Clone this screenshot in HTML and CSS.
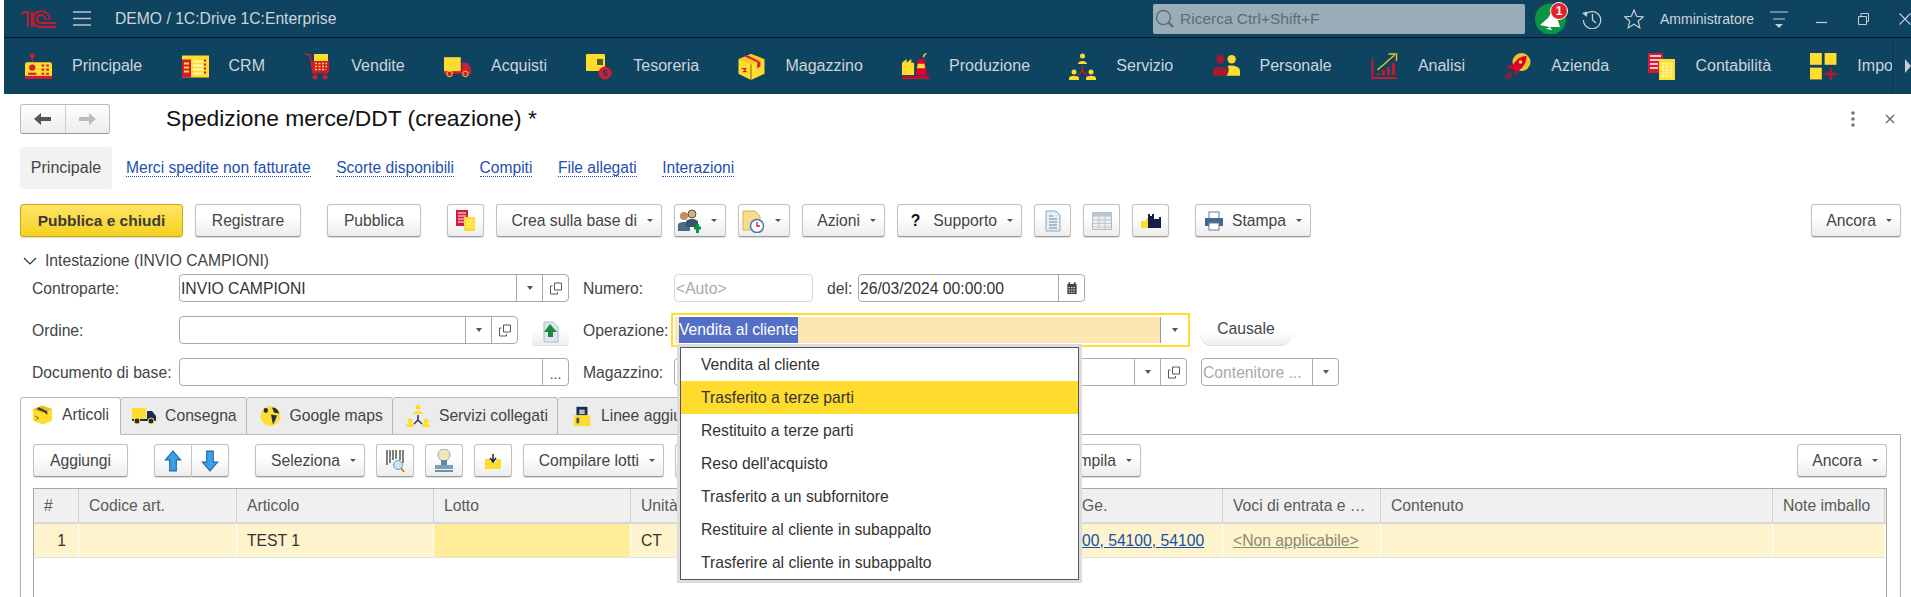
FILE: index.html
```html
<!DOCTYPE html>
<html lang="it">
<head>
<meta charset="utf-8">
<title>Spedizione merce/DDT</title>
<link rel="stylesheet" href="styles.css">
</head>
<body>
<div class="app">
  <header class="topbar">
    <svg class="logo" viewBox="0 0 37 18"><g fill="none" stroke="#c8192e" stroke-width="2"><path d="M1 4 L5 2 H8 V17"/><path d="M12 2 V17" /><path d="M30 10 C29 4 25 1 21 1 C16 1 13 5 13 9 C13 14 16 17 21 17 H36"/><path d="M26 10 C25 7 23 5 21 5 C18 5 17 7 17 9 C17 12 19 13 21 13 H36"/></g></svg>
    <svg class="burger" viewBox="0 0 18 15"><path d="M0 1H18M0 7.500H18M0 14H18" stroke="#b9c4cb" stroke-width="1.300"/></svg>
    <span class="apptitle">DEMO / 1C:Drive 1C:Enterprise</span>
    <div class="search">
      <svg class="searchicon" viewBox="0 0 20 20"><circle cx="8.500" cy="8.500" r="7" fill="none" stroke="#5f6c74" stroke-width="1.400"/><path d="M13.500 13.500L18 18" stroke="#5f6c74" stroke-width="2.400"/></svg>
      <span>Ricerca Ctrl+Shift+F</span>
    </div>
    <div class="bell">
      <svg class="bellicon" viewBox="0 0 31 31"><ellipse cx="15.500" cy="16" rx="15.500" ry="15.500" fill="#0a9443"/><path d="M5 22L13 15L19 5L25 24L14 24Z" fill="#fff"/><path d="M11 26L17 27L15 24Z" fill="#fff"/></svg>
      <span class="badge">1</span>
    </div>
    <svg class="hist" viewBox="0 0 20 20"><path d="M3.200 6A8.600 8.600 0 1 1 1.500 11" fill="none" stroke="#c5ced4" stroke-width="1.300"/><path d="M0 4L5 2.500L5 8Z" fill="#c5ced4"/><path d="M10.500 5V11L14 14" fill="none" stroke="#c5ced4" stroke-width="1.300"/></svg>
    <svg class="star" viewBox="0 0 20 20"><path d="M10 1L12.600 7.300L19.300 7.800L14.200 12.200L15.800 18.900L10 15.300L4.200 18.900L5.800 12.200L.7 7.800L7.400 7.300Z" fill="none" stroke="#c5ced4" stroke-width="1.200"/></svg>
    <span class="user">Amministratore</span>
    <svg class="funnel" viewBox="0 0 18 20"><path d="M0 3H18M3 10H15" stroke="#c5ced4" stroke-width="1.200"/><path d="M5 15H13L9 19Z" fill="#c5ced4"/></svg>
    <svg class="min" viewBox="0 0 11 24"><path d="M0 15.500H11" stroke="#c5ced4" stroke-width="1.200"/></svg>
    <svg class="restore" viewBox="0 0 11 12"><path d="M.5 3.500H8.500V11.500H.5ZM3 3.500V.5H10.500V8.500H8.500" fill="none" stroke="#c5ced4"/></svg>
    <svg class="closewin" viewBox="0 0 12 12"><path d="M.5 .5L11.500 11.500M11.500 .5L.5 11.500" stroke="#c5ced4" stroke-width="1.100"/></svg>
  </header>

  <nav class="mainnav">
    <div class="navscroll">
      <a class="navitem"><svg class="navicon" viewBox="0 0 26 26"><path d="M7 2V9" stroke="#d01c34" stroke-width="1.400"/><circle cx="7" cy="2.500" r="2.300" fill="#d01c34"/><rect y="9" width="26" height="15" rx="2" fill="#ffdc2e"/><rect y="22" width="26" height="3" fill="#d01c34"/><circle cx="7" cy="14" r="3" fill="#d01c34"/><path d="M3 20H11" stroke="#d01c34" stroke-width="2"/><path d="M16 12H24M16 16H24M16 20H24" stroke="#d01c34" stroke-width="2" stroke-dasharray="2.500 2"/></svg><span>Principale</span></a>
      <a class="navitem"><svg class="navicon" viewBox="0 0 27 24"><rect width="27" height="22" y="1" fill="#ffdc2e"/><rect y="5" width="9" height="18" fill="#d01c34"/><path d="M2 9H7M2 13H7M2 17H7" stroke="#ffdc2e" stroke-width="2"/><path d="M11 7H21M11 11H21M11 15H21M11 19H21" stroke="#fff6c0" stroke-width="2"/><path d="M23 5V19" stroke="#d01c34" stroke-width="2" stroke-dasharray="2 2"/></svg><span>CRM</span></a>
      <a class="navitem"><svg class="navicon" viewBox="0 0 27 27"><path d="M1 1L6 2L9 20H24" fill="none" stroke="#d01c34" stroke-width="1.500"/><rect x="10" y="1" width="14" height="7" fill="#ffdc2e"/><rect x="8" y="8" width="17" height="11" fill="#d01c34"/><path d="M11 10.500H23M11 13.500H23M11 16.500H22" stroke="#ffdc2e" stroke-width="1.600" stroke-dasharray="2 1.500"/><circle cx="11" cy="24" r="2.500" fill="#d01c34"/><circle cx="21" cy="24" r="2.500" fill="#d01c34"/></svg><span>Vendite</span></a>
      <a class="navitem"><svg class="navicon" viewBox="0 0 29 24"><rect y="2" width="18" height="16" fill="#ffdc2e"/><path d="M19 8H25L29 14V18H19Z" fill="#d01c34"/><rect y="17" width="29" height="3" fill="#d01c34"/><circle cx="6" cy="20" r="3" fill="#d01c34" stroke="#ffdc2e"/><circle cx="23" cy="20" r="3" fill="#d01c34" stroke="#ffdc2e"/></svg><span>Acquisti</span></a>
      <a class="navitem"><svg class="navicon" viewBox="0 0 27 27"><rect y="1" width="19" height="17" rx="1" fill="#ffdc2e"/><rect x="11" y="6" width="6" height="6" fill="#5a5a20"/><circle cx="19" cy="20" r="6.500" fill="#d01c34"/><path d="M21 17.500H18V20H20.500V22.500H17" fill="none" stroke="#0f4460" stroke-width="1.200"/></svg><span>Tesoreria</span></a>
      <a class="navitem"><svg class="navicon" viewBox="0 0 25 26"><path d="M12 1L25 6V20L12 26L0 20V6Z" fill="#ffdc2e"/><path d="M12 1L25 6L12 11L0 6Z" fill="#f6c81a"/><path d="M5 3L18 9L20 8L8 2Z" fill="#d01c34"/><path d="M12 11V26" stroke="#8a6a10"/><path d="M18 9V15L21 13V8Z" fill="#d01c34"/><path d="M3 15H7L5 18H8" fill="none" stroke="#d01c34" stroke-width="1.200"/></svg><span>Magazzino</span></a>
      <a class="navitem"><svg class="navicon" viewBox="0 0 29 28"><path d="M0 9L5 5V9L10 5V9H13V22H0Z" fill="#ffdc2e" transform="translate(0 1)"/><path d="M17 6H24L27 23H15Z" fill="#e2002a"/><path d="M17 11H24L25 16H16Z" fill="#ffdc2e"/><path d="M26 0C24 1 23 2 23 4" stroke="#ffdc2e" stroke-width="1.500" fill="none"/><rect y="24" width="29" height="2" fill="#e2002a"/><rect y="26.500" width="29" height="1" fill="#d01c34"/></svg><span>Produzione</span></a>
      <a class="navitem"><svg class="navicon" viewBox="0 0 27 27"><circle cx="13.500" cy="3" r="2.500" fill="#ffdc2e"/><path d="M9 11C9 7 18 7 18 11Z" fill="#ffdc2e"/><circle cx="5" cy="19" r="2.500" fill="#ffdc2e"/><path d="M0 27V25C0 22 10 22 10 25V27Z" fill="#ffdc2e"/><circle cx="22" cy="19" r="2.500" fill="#ffdc2e"/><path d="M17 27V25C17 22 27 22 27 25V27Z" fill="#ffdc2e"/><path d="M13.500 13V18L9 22M13.500 18L18 22" stroke="#c8192e" stroke-width="1.500" fill="none"/></svg><span>Servizio</span></a>
      <a class="navitem"><svg class="navicon" viewBox="0 0 26 24"><circle cx="7" cy="5" r="4" fill="#a81a30"/><path d="M0 21V16C0 11 14 11 14 16V21Z" fill="#a81a30"/><circle cx="18" cy="5" r="4" fill="#ffdc2e"/><path d="M13 21H26V16C26 11 15 10 14 12C16 14 15 18 13 21Z" fill="#ffdc2e"/></svg><span>Personale</span></a>
      <a class="navitem"><svg class="navicon" viewBox="0 0 26 27"><path d="M1 6V25H26" fill="none" stroke="#c8192e" stroke-width="2"/><path d="M6 17L23 2" stroke="#e6c21e" stroke-width="1.500"/><path d="M17 1H25V8" fill="none" stroke="#e6c21e" stroke-width="1.500"/><path d="M7 22V20M12 22V17M17 22V14M22 22V10" stroke="#c8192e" stroke-width="3"/></svg><span>Analisi</span></a>
      <a class="navitem"><svg class="navicon" viewBox="0 0 26 27"><circle cx="17" cy="9" r="9" fill="#e6c62c"/><path d="M22 3C15 3 9 9 7 15L11 19C17 17 22 11 22 3Z" fill="#e2002a"/><path d="M7 11L2 15L7 16ZM15 17L11 22L10 17Z" fill="#e2002a"/><path d="M6 18L1 26M8 20L4 26" stroke="#a81a30" stroke-width="1.500"/><circle cx="16" cy="9" r="1.800" fill="#ffdc2e"/></svg><span>Azienda</span></a>
      <a class="navitem"><svg class="navicon" viewBox="0 0 27 27"><rect width="15" height="20" fill="#d01c34"/><path d="M2 3H13M2 7H13M2 11H10M2 15H10" stroke="#fff" stroke-width="1.500"/><rect x="11" y="6" width="16" height="21" fill="#ffdc2e"/><path d="M13 11H25M13 14H25M13 17H25M13 20H25M13 23H25" stroke="#fff6b0" stroke-width="1"/><path d="M15 9V25M19 9V25M23 9V25" stroke="#fff6b0" stroke-width="1"/></svg><span>Contabilità</span></a>
      <a class="navitem"><svg class="navicon" viewBox="0 0 24 24"><rect width="10.500" height="10.500" fill="#ffdc2e"/><rect x="13" width="10.500" height="10.500" fill="#ffdc2e"/><rect y="13" width="10.500" height="10.500" fill="#ffdc2e"/><path d="M13 18.500H24M18.500 13V24" stroke="#a81a30" stroke-width="2.400"/></svg><span>Impostazioni</span></a>
    </div>
    <svg class="navmore" viewBox="0 0 6 14"><path d="M0 0L6 7L0 14Z" fill="#c5ced4"/></svg>
  </nav>

  <main class="form">
    <div class="titlerow">
      <div class="histnav">
        <button class="histbtn"><svg viewBox="0 0 18 14"><path d="M0 7L7 1V5H17V9H7V13Z" fill="#555"/></svg></button>
        <button class="histbtn"><svg viewBox="0 0 18 14"><path d="M18 7L11 1V5H1V9H11V13Z" fill="#bbb"/></svg></button>
      </div>
      <h1 class="doctitle">Spedizione merce/DDT (creazione) *</h1>
      <svg class="dots" viewBox="0 0 4 16"><circle cx="2" cy="2" r="1.800" fill="#777"/><circle cx="2" cy="8" r="1.800" fill="#777"/><circle cx="2" cy="14" r="1.800" fill="#777"/></svg>
      <svg class="closeform" viewBox="0 0 10 10"><path d="M1 1L9 9M9 1L1 9" stroke="#666" stroke-width="1.300"/></svg>
    </div>

    <div class="pagetabs">
      <span class="pagetab">Principale</span>
      <a class="pagelink">Merci spedite non fatturate</a>
      <a class="pagelink">Scorte disponibili</a>
      <a class="pagelink">Compiti</a>
      <a class="pagelink">File allegati</a>
      <a class="pagelink">Interazioni</a>
    </div>

    <div class="toolbar">
      <button class="btn primary w163">Pubblica e chiudi</button>
      <button class="btn w106">Registrare</button>
      <button class="btn w94 far">Pubblica</button>
      <button class="btn ico far"><svg class="i20" viewBox="0 0 20 22"><rect width="12" height="16" fill="#d01c34"/><path d="M2 3H10M2 6H10M2 9H8M2 12H8" stroke="#fff" stroke-width="1.200"/><rect x="8" y="7" width="11" height="14" fill="#ffdc2e"/><path d="M10 11H17M10 14H17M10 17H17" stroke="#fff6b0"/></svg></button>
      <button class="btn w166">Crea sulla base di<i class="caret"></i></button>
      <button class="btn w52"><svg class="i24" viewBox="0 0 24 24"><circle cx="7" cy="7" r="4" fill="#c09060"/><path d="M1 22V16C1 12 13 12 13 16V22Z" fill="#4a6a8a"/><circle cx="15" cy="5" r="4" fill="#d8b080" stroke="#333" stroke-width=".8"/><path d="M9 20V13C9 9 21 9 21 13V18H9Z" fill="#39536e"/><path d="M17 19H24M20.500 15V24" stroke="#0a9443" stroke-width="3"/></svg><i class="caret"></i></button>
      <button class="btn w52"><svg class="i24" viewBox="0 0 24 24"><path d="M2 2H14L19 7V21H2Z" fill="#f7dc90" stroke="#d8b050"/><circle cx="16" cy="17" r="6.500" fill="#fff" stroke="#4a7ab0" stroke-width="1.500"/><path d="M16 13V17H19" stroke="#c8192e" stroke-width="1.300" fill="none"/></svg><i class="caret"></i></button>
      <button class="btn w83">Azioni<i class="caret"></i></button>
      <button class="btn w125"><span class="help">?</span>Supporto<i class="caret"></i></button>
      <button class="btn ico"><svg class="i20" viewBox="0 0 18 22"><path d="M2 1H12L16 5V21H2Z" fill="#e6eef4" stroke="#88a8c0"/><path d="M5 6H9M5 9H13M5 12H13M5 15H13M5 18H13" stroke="#6a8aa0"/></svg></button>
      <button class="btn ico"><svg class="i20" viewBox="0 0 20 18"><rect x=".5" y=".5" width="19" height="17" fill="#f2ede8" stroke="#a8bccb"/><rect x=".5" y=".5" width="19" height="4" fill="#b4c8d6"/><path d="M1 8H19M1 11.500H19M1 15H19M7 4V18M13 4V18" stroke="#b8c8d4"/></svg></button>
      <button class="btn ico"><svg class="i20" viewBox="0 0 20 16"><path d="M0 8H5V5H9V15H0Z" fill="#ffdc2e"/><path d="M7 8V1H9V3H11V1H13V6H18V4H20V15H7Z" fill="#141e48"/></svg></button>
      <button class="btn w116 far"><svg class="i20 mr" viewBox="0 0 20 20"><rect x="5" y="1" width="10" height="7" fill="#fff" stroke="#6a7a8a"/><rect x="1" y="7" width="18" height="8" fill="#3e6a94"/><rect x="5" y="12" width="10" height="7" fill="#fff" stroke="#6a7a8a"/></svg>Stampa<i class="caret"></i></button>
      <button class="btn w90 pushright">Ancora<i class="caret"></i></button>
    </div>

    <div class="group"><svg class="chev" viewBox="0 0 14 8"><path d="M1 1L7 7L13 1" fill="none" stroke="#333" stroke-width="1.200"/></svg>Intestazione (INVIO CAMPIONI)</div>

    <div class="fields">
      <div class="frow">
        <label class="lbl">Controparte:</label>
        <div class="field f390"><span class="val">INVIO CAMPIONI</span><span class="fb ddb"><i class="tri"></i></span><span class="fb opn"><svg viewBox="0 0 12 12"><path d="M4.500 .5H11.500V7.500H4.500ZM2.500 3.500H.5V11.500H7.500V9.500" fill="none" stroke="#555"/></svg></span></div>
        <label class="lbl lbl91">Numero:</label>
        <div class="field off f139"><span class="val ph">&lt;Auto&gt;</span></div>
        <label class="lbl del">del:</label>
        <div class="field f227"><span class="val">26/03/2024 00:00:00</span><span class="fb"><svg viewBox="0 0 12 14"><path d="M1 2H11V13H1Z" fill="#444"/><path d="M3 0V3M9 0V3" stroke="#444" stroke-width="1.400"/><path d="M2.500 6H9.500M2.500 8.500H9.500M2.500 11H9.500" stroke="#fff" stroke-dasharray="1.500 1"/></svg></span></div>
      </div>
      <div class="frow">
        <label class="lbl">Ordine:</label>
        <div class="field f339"><span class="val"></span><span class="fb ddb"><i class="tri"></i></span><span class="fb opn"><svg viewBox="0 0 12 12"><path d="M4.500 .5H11.500V7.500H4.500ZM2.500 3.500H.5V11.500H7.500V9.500" fill="none" stroke="#555"/></svg></span></div>
        <button class="softbtn"><svg class="i20" viewBox="0 0 20 22"><path d="M3 1H12L17 6V21H3Z" fill="#dce8ee" stroke="#a8bcc8"/><path d="M9 3L16 11H12V16H7V11H3Z" fill="#1f8a3a"/></svg></button>
        <label class="lbl lbl88">Operazione:</label>
        <div class="focusfield"><span class="focusval"><span class="sel">Vendita al cliente</span></span><span class="fb ddbf"><i class="tri"></i></span></div>
        <button class="causale">Causale</button>
      </div>
      <div class="frow">
        <label class="lbl">Documento di base:</label>
        <div class="field f390"><span class="val"></span><span class="fb dotsb">...</span></div>
        <label class="lbl lbl91">Magazzino:</label>
        <div class="field f513"><span class="val"></span><span class="fb ddb"><i class="tri"></i></span><span class="fb opn"><svg viewBox="0 0 12 12"><path d="M4.500 .5H11.500V7.500H4.500ZM2.500 3.500H.5V11.500H7.500V9.500" fill="none" stroke="#555"/></svg></span></div>
        <div class="field f138"><span class="val ph">Contenitore ...</span><span class="fb ddb"><i class="tri"></i></span></div>
      </div>
    </div>

    <div class="tabs">
      <div class="tab active"><svg class="i21" viewBox="0 0 22 22"><path d="M11 1L21 5V17L11 21L1 17V5Z" fill="#ffdc2e"/><path d="M11 1L21 5L11 9L1 5Z" fill="#e8c020"/><path d="M7 3L16 7V11L13 8L5 5Z" fill="#3a3a3a"/><path d="M3 12L7 14L4 16" stroke="#6a6a20" fill="none"/></svg>Articoli</div>
      <div class="tab"><svg class="i24 tw" viewBox="0 0 24 18"><rect y="1" width="14" height="12" fill="#ffdc2e"/><path d="M15 4H20L24 9V14H15Z" fill="#1e2a50"/><rect y="12" width="24" height="2" fill="#1e2a50"/><circle cx="5" cy="14" r="3" fill="#1e2a50" stroke="#ffdc2e"/><circle cx="19" cy="14" r="3" fill="#1e2a50" stroke="#ffdc2e"/></svg>Consegna</div>
      <div class="tab"><svg class="i21" viewBox="0 0 21 21"><circle cx="10.500" cy="10.500" r="10" fill="#ffdc2e"/><path d="M4 3C8 1 9 5 7 7C5 8 3 7 4 3ZM12 2C16 2 19 5 19 8L14 7ZM11 9L17 10L15 15L13 19L12 14Z" fill="#1e2a50"/></svg>Google maps</div>
      <div class="tab"><svg class="i24 tw" viewBox="0 0 24 24"><circle cx="12" cy="3" r="2.500" fill="#ffdc2e"/><path d="M7 10C7 6 17 6 17 10Z" fill="#ffdc2e"/><circle cx="4" cy="17" r="2.500" fill="#ffdc2e"/><path d="M0 23V21C0 19 8 19 8 21V23Z" fill="#ffdc2e"/><circle cx="20" cy="17" r="2.500" fill="#ffdc2e"/><path d="M16 23V21C16 19 24 19 24 21V23Z" fill="#ffdc2e"/><path d="M12 11V16L8 20M12 16L16 20" stroke="#1e2a50" stroke-width="1.400" fill="none"/></svg>Servizi collegati</div>
      <div class="tab"><svg class="i21" viewBox="0 0 21 24"><path d="M5 2H17V12H5Z" fill="#1e2a50"/><path d="M8 5H14V10H8Z" fill="#aac0d0"/><rect x="2" y="11" width="18" height="12" fill="#ffdc2e"/><path d="M5 14H8V20H5Z" fill="#555"/></svg>Linee aggiuntive</div>
    </div>
    <section class="panel">
      <div class="toolbar inner">
        <button class="btn w95">Aggiungi</button>
        <div class="btngroup far">
          <button class="btn seg"><svg class="i20" viewBox="0 0 16 20"><path d="M8 1L15 9H11V19H5V9H1Z" fill="#3aa0e8" stroke="#1c6aa8"/></svg></button>
          <button class="btn seg"><svg class="i20" viewBox="0 0 16 20"><path d="M8 19L15 11H11V1H5V11H1Z" fill="#3aa0e8" stroke="#1c6aa8"/></svg></button>
        </div>
        <button class="btn w110 far">Seleziona<i class="caret"></i></button>
        <button class="btn ico"><svg class="i24" viewBox="0 0 20 24"><path d="M2 1V16M5 1V14M8 1V11M11 1V10M15 1V11M18 1V14" stroke="#555" stroke-width="1.500"/><circle cx="13" cy="16" r="4.500" fill="#cfe4f0" stroke="#6a9ab8"/><path d="M16 19L19 23" stroke="#d08030" stroke-width="2"/></svg></button>
        <button class="btn ico"><svg class="i24" viewBox="0 0 22 24"><circle cx="11" cy="6" r="6" fill="#f3e7b8" stroke="#8aa8b8"/><path d="M8 11H14V16H8Z" fill="#5c8aa0"/><rect x="2" y="16" width="18" height="4" fill="#7aa0b4"/><path d="M2 22H20" stroke="#4a7088" stroke-width="1.500"/></svg></button>
        <button class="btn ico"><svg class="i16" viewBox="0 0 16 16"><path d="M0 6H5V9H11V6H16V16H0Z" fill="#ffdc2e"/><path d="M8 1V8M5 5L8 9L11 5" stroke="#223" stroke-width="1.500" fill="none"/></svg></button>
        <button class="btn w141">Compilare lotti<i class="caret"></i></button>
        <button class="btn w346"></button>
        <button class="btn w109">Compila<i class="caret"></i></button>
        <button class="btn w90 pushright">Ancora<i class="caret"></i></button>
      </div>
      <div class="grid">
        <div class="ghead">
          <div class="gc">#</div>
          <div class="gc">Codice art.</div>
          <div class="gc">Articolo</div>
          <div class="gc">Lotto</div>
          <div class="gc">Unità</div>
          <div class="gc">Ge.</div>
          <div class="gc">Voci di entrata e …</div>
          <div class="gc">Contenuto</div>
          <div class="gc">Note imballo</div>
        </div>
        <div class="grow">
          <div class="gc num">1</div>
          <div class="gc"></div>
          <div class="gc">TEST 1</div>
          <div class="gc mark"></div>
          <div class="gc">CT</div>
          <div class="gc"><a class="reflink">00, 54100, 54100</a></div>
          <div class="gc"><a class="nalink">&lt;Non applicabile&gt;</a></div>
          <div class="gc"></div>
          <div class="gc"></div>
        </div>
      </div>
    </section>
  </main>
</div>

<ul class="popup">
  <li>Vendita al cliente</li>
  <li class="hot">Trasferito a terze parti</li>
  <li>Restituito a terze parti</li>
  <li>Reso dell'acquisto</li>
  <li>Trasferito a un subfornitore</li>
  <li>Restituire al cliente in subappalto</li>
  <li>Trasferire al cliente in subappalto</li>
</ul>
</body>
</html>
```

FILE: styles.css
```css
* { box-sizing: border-box; }
html, body { margin: 0; height: 597px; overflow: hidden; background: #fff; }
body { font: 15.700px "Liberation Sans", Arial, sans-serif; color: #444; }
button { font: inherit; color: inherit; padding: 0; }
.app { padding-left: 4px; height: 597px; overflow: hidden; }

/* top bar */
.topbar { height: 38px; background: #0f4460; border-bottom: 1px solid #03192c; display: flex; align-items: center; color: #cdd5da; }
.logo { width: 37px; height: 18px; margin-left: 16px; }
.burger { width: 18px; height: 15px; margin-left: 16px; }
.apptitle { margin-left: 24px; font-size: 15.700px; }
.search { margin-left: auto; width: 372px; height: 30px; background: #9aaeb9; border-radius: 2px; display: flex; align-items: center; padding-left: 2px; color: #5f6c74; font-size: 15.500px; }
.searchicon { width: 20px; height: 20px; margin-right: 5px; }
.bell { position: relative; width: 31px; height: 31px; margin-left: 10px; }
.bellicon { width: 31px; height: 31px; display: block; }
.badge { position: absolute; left: 15px; top: -1px; width: 18px; height: 18px; border-radius: 50%; background: #e8202a; border: 1px solid #fff; color: #fff; font-size: 12px; font-weight: 700; line-height: 16px; text-align: center; }
.hist { width: 20px; height: 20px; margin-left: 16px; }
.star { width: 20px; height: 20px; margin-left: 22px; }
.user { margin-left: 16px; width: 94px; font-size: 14px; white-space: nowrap; }
.funnel { width: 18px; height: 20px; margin-left: 16px; }
.min { width: 11px; height: 24px; margin-left: 28px; }
.restore { width: 11px; height: 12px; margin-left: 31px; }
.closewin { width: 12px; height: 12px; margin-left: 30px; }

/* main nav */
.mainnav { height: 56px; background: #0f4460; display: flex; align-items: stretch; color: #cdd5da; font-size: 16px; }
.navscroll { width: 1890px; display: flex; align-items: center; padding-left: 21px; overflow: hidden; border-right: 1px solid #0a3550; }
.navitem { display: flex; align-items: center; flex: none; margin-right: 39.300px; }
.navicon { width: 27px; height: 27px; margin-right: 20px; flex: none; }
.navmore { width: 6px; height: 14px; margin: auto 0 auto 12px; }

/* form head */
.form { padding: 0 10px 0 16px; }
.titlerow { display: flex; align-items: center; height: 30px; margin-top: 10px; }
.histnav { width: 90px; height: 30px; display: flex; border: 1px solid #bbb; border-bottom-color: #999; border-radius: 3px; background: linear-gradient(#fff, #ececec); }
.histbtn { flex: 1; border: 0; background: none; display: flex; align-items: center; justify-content: center; }
.histbtn + .histbtn { border-left: 1px solid #ccc; }
.histbtn svg { width: 18px; height: 14px; }
.doctitle { margin: 0 0 2px 56px; font-size: 22.800px; font-weight: 400; color: #111; white-space: nowrap; }
.dots { width: 4px; height: 16px; margin-left: auto; margin-right: 30px; }
.closeform { width: 10px; height: 10px; margin-right: 6px; }

.pagetabs { display: flex; align-items: center; height: 42px; margin-top: 13px; }
.pagetab { width: 92px; height: 42px; background: #f2f2f2; border-radius: 3px; display: flex; align-items: center; justify-content: center; margin-right: 14px; font-size: 16px; }
.pagelink { color: #1f4fb0; border-bottom: 1px dotted #1f4fb0; margin-right: 25.500px; line-height: 17px; font-size: 15.600px; }

/* toolbars & buttons */
.toolbar { display: flex; align-items: stretch; gap: 12px; height: 33px; margin-top: 15px; }
.btn { height: 33px; border: 1px solid #c2c2c2; border-bottom: 1px solid #9a9a9a; border-radius: 3px; background: linear-gradient(#fff 40%, #ececec); display: flex; align-items: center; justify-content: center; white-space: nowrap; box-shadow: 0 1px 1px #ddd; flex: none; }
.btn:has(.caret) { justify-content: flex-end; padding-right: 8px; }
.primary { background: linear-gradient(#ffe566, #f5d21f); border-color: #c9a80f; font-weight: 700; font-size: 15.500px; color: #3a3a3a; }
.far { margin-left: 14px; }
.ico { width: 37px; }
.w52 { width: 52px; } .w83 { width: 83px; } .w90 { width: 90px; } .w94 { width: 94px; } .w95 { width: 95px; }
.w106 { width: 106px; } .w109 { width: 109px; } .w110 { width: 110px; } .w116 { width: 116px; } .w125 { width: 125px; }
.w141 { width: 141px; } .w163 { width: 163px; } .w166 { width: 166px; } .w346 { width: 346px; }
.pushright { margin-left: auto; }
.caret { width: 0; height: 0; border: 3px solid transparent; border-top: 3.500px solid #555; border-bottom: 0; margin-left: 10px; }
.i16 { width: 16px; height: 16px; }
.i20 { width: 20px; height: 22px; }
.i21 { width: 21px; height: 22px; margin-right: 9px; flex: none; }
.i24 { width: 24px; height: 24px; }
.tw { margin-right: 9px; flex: none; }
.mr { margin-right: 8px; }
.help { color: #111; font-weight: 700; margin-right: 13px; }

.group { height: 20px; margin-top: 14px; display: flex; align-items: center; padding-left: 3px; color: #444; }
.chev { width: 14px; height: 8px; margin-right: 8px; }

/* fields */
.fields { display: flex; flex-direction: column; gap: 14px; margin-top: 3px; }
.frow { display: flex; align-items: center; height: 28px; }
.lbl { width: 159px; padding: 1px 0 0 12px; flex: none; white-space: nowrap; }
.lbl91 { width: 91px; margin-left: 14px; padding-left: 0; }
.lbl88 { width: 88px; margin-left: 14px; padding-left: 0; }
.del { width: 31px; margin-left: 14px; padding-left: 0; }
.field { height: 28px; border: 1px solid #aaa; border-radius: 4px; display: flex; align-items: stretch; background: #fff; flex: none; }
.off { border-color: #d8d8d8; }
.f138 { width: 138px; margin-left: 14px; } .f139 { width: 139px; } .f227 { width: 227px; } .f339 { width: 339px; } .f390 { width: 390px; } .f513 { width: 513px; }
.val { flex: 1; padding-left: 1px; line-height: 27px; color: #333; white-space: nowrap; overflow: hidden; }
.ph { color: #aaa; }
.fb { width: 26px; border-left: 1px solid #aaa; display: flex; align-items: center; justify-content: center; flex: none; }
.fb svg { width: 12px; height: 13px; }
.tri { width: 0; height: 0; border: 3.500px solid transparent; border-top: 4px solid #555; border-bottom: 0; }
.dotsb { line-height: 1; align-items: flex-end; padding-bottom: 4px; font-size: 14px; }
.softbtn { width: 37px; height: 28px; margin: 4px 0 0 14px; border: 0; border-bottom: 1px solid #ddd; border-radius: 3px; background: linear-gradient(#fff 40%, #eee); display: flex; align-items: center; justify-content: center; flex: none; }
.focusfield { width: 519px; height: 34px; border: 2px solid #ffdc2e; display: flex; padding: 2px 0; flex: none; background: #fff; }
.focusval { flex: 1; background: #fde6b0; border-right: 1px solid #999; padding: 0 0 0 4px; margin-left: 2px; line-height: 26px; }
.sel { background: #5470c6; color: #fff; display: inline-block; line-height: 26px; }
.ddbf { border-left: 0; width: 27px; }
.causale { width: 92px; height: 28px; margin: 4px 0 0 10px; padding-bottom: 5px; border: 0; border-bottom: 1px solid #ddd; border-radius: 12px; background: linear-gradient(#fff 50%, #eee); flex: none; }

/* tabs */
.tabs { display: flex; margin-top: 11px; height: 38px; position: relative; z-index: 1; }
.tab { display: flex; align-items: center; padding: 0 9px 0 13px; background: #ececec; border: 1px solid #b8b8b8; border-left: 0; white-space: nowrap; border-radius: 3px 3px 0 0; }
.tab.active { background: #fff; border-left: 1px solid #b8b8b8; border-bottom-color: #fff; padding: 0 11px 2px; }
.active + .tab { padding-left: 11px; }
.panel { margin-top: -1px; border: 1px solid #b0b0b0; height: 200px; padding: 9px 13px 0 12px; }
.inner { margin-top: 0; gap: 11px; }
.inner .far { margin-left: 15px; }
.inner .ico { width: 38px; }
.btngroup { display: flex; width: 75px; }
.seg { flex: 1; border-radius: 3px 0 0 3px; }
.seg + .seg { border-left: 0; border-radius: 0 3px 3px 0; }

/* table */
.grid { margin-top: 11px; height: 120px; border: 1px solid #a8a8a8; border-bottom: 0; }
.ghead, .grow { display: grid; grid-template-columns: 45px 158px 197px 197px 441px 151px 158px 392px 112px; }
.ghead { height: 35px; background: #f0f0f0; border-bottom: 2px solid #d8d8d8; color: #5a5a5a; }
.grow { height: 34px; background: #fdf3cc; border-bottom: 1px solid #e2e2e2; color: #333; }
.gc { padding-left: 10px; display: flex; align-items: center; white-space: nowrap; overflow: hidden; }
.ghead .gc { border-right: 1px solid #d0d0d0; }
.grow .gc { border-right: 1px solid #fff; }
.gc.num { justify-content: flex-end; padding-right: 12px; }
.gc.mark { background: #ffec99; }
.reflink { color: #1a4fa8; text-decoration: underline; }
.nalink { color: #8a8a72; text-decoration: underline; }

/* dropdown */
.popup { position: absolute; left: 680px; top: 347px; width: 399px; margin: 0; padding: 0; list-style: none; background: #fff; border: 1px solid #555; box-shadow: 0 0 0 3px #ddd; z-index: 5; color: #333; }
.popup li { height: 33px; line-height: 33px; padding-left: 20px; }
.popup .hot { background: #ffdc2e; }
```
